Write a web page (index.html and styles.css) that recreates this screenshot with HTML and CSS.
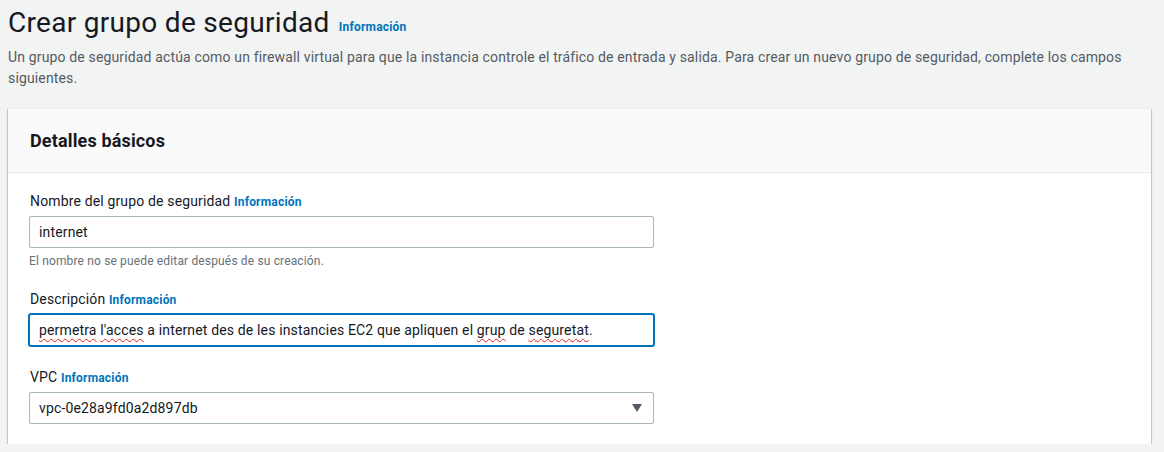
FILE: index.html
```html
<!DOCTYPE html>
<html lang="es">
<head>
<meta charset="utf-8">
<link rel="stylesheet" href="styles.css">
</head>
<body>
<div class="page">
  <header class="page-head">
    <h1 class="title">Crear grupo de seguridad <a class="info" href="#">Información</a></h1>
    <p class="lead">Un grupo de seguridad actúa como un firewall virtual para que la instancia controle el tráfico de entrada y salida. Para crear un nuevo grupo de seguridad, complete los campos siguientes.</p>
  </header>
  <section class="card">
    <div class="card-head"><h2>Detalles básicos</h2></div>
    <div class="card-body">
      <div class="field first">
        <label class="label">Nombre del grupo de seguridad <a class="info" href="#">Información</a></label>
        <div class="input"><span>internet</span></div>
        <div class="hint">El nombre no se puede editar después de su creación.</div>
      </div>
      <div class="field">
        <label class="label">Descripción <a class="info" href="#">Información</a></label>
        <div class="input focused"><span class="value"><span class="sp">permetra</span> <span class="sp">l'acces</span> a internet des de les instancies EC2 que apliquen el <span class="sp">grup</span> de <span class="sp">seguretat</span>.</span></div>
      </div>
      <div class="field">
        <label class="label">VPC <a class="info" href="#">Información</a></label>
        <div class="input select"><span>vpc-0e28a9fd0a2d897db</span><svg class="caret" width="10" height="8" viewBox="0 0 10 8"><path d="M0 0h10L5 8z" fill="#545b64"/></svg></div>
      </div>
    </div>
  </section>
</div>
</body>
</html>
```
FILE: styles.css
```css
* { box-sizing: border-box; }
html, body { margin: 0; padding: 0; }
body {
  background: #f2f3f3;
  font-family: Roboto, "Liberation Sans", sans-serif;
  color: #16191f;
  font-size: 14px;
  letter-spacing: 0.15px;
}
.page { padding: 3px 13px 0 8px; }
.title {
  margin: 0;
  font-size: 28px;
  font-weight: 400;
  line-height: 40px;
  color: #16191f;
  letter-spacing: 0.3px;
}
.info {
  color: #0073bb;
  font-size: 12px;
  font-weight: 700;
  text-decoration: none;
  margin-left: 2px;
  letter-spacing: 0.2px;
}
.title .info { vertical-align: 1px; }
.lead {
  margin: 0;
  color: #545b64;
  font-size: 14px;
  line-height: 21px;
}
.card {
  margin-top: 19px;
  background: #fff;
  border-top: 1px solid #eaeded;
  box-shadow: 0 1px 1px 0 rgba(0,28,36,.3), 1px 1px 1px 0 rgba(0,28,36,.15), -1px 1px 1px 0 rgba(0,28,36,.15);
}
.card-head {
  background: #fafafa;
  border-bottom: 1px solid #eaeded;
  height: 64px;
  display: flex;
  align-items: center;
  padding: 0 22px;
}
.card-head h2 {
  margin: 0;
  font-size: 18px;
  font-weight: 700;
}
.card-body { padding: 18px 21px 20px; }
.field { margin-bottom: 21px; }
.field.first { margin-bottom: 20px; }
.field:last-child { margin-bottom: 0; }
.label {
  display: block;
  line-height: 20px;
  margin-bottom: 4px;
  padding-left: 1px;
}
.label .info { margin-left: 0; }
.input {
  width: 625px;
  height: 32px;
  border: 1px solid #aab7b8;
  border-radius: 2px;
  padding: 0 9px;
  display: flex;
  align-items: center;
  font-size: 14px;
  color: #16191f;
  background: #fff;
}
.input.focused {
  border: 1px solid #0073bb;
  box-shadow: 0 0 0 1px #0073bb;
}
.value { white-space: pre; }
.sp {
  text-decoration: underline wavy #e02020;
  text-decoration-thickness: 1px;
  text-underline-offset: 3px;
}
.hint {
  margin-top: 5px;
  font-size: 12px;
  color: #687078;
  line-height: 16px;
}
.select { justify-content: space-between; padding-right: 11px; }
.caret { display: block; }
```
